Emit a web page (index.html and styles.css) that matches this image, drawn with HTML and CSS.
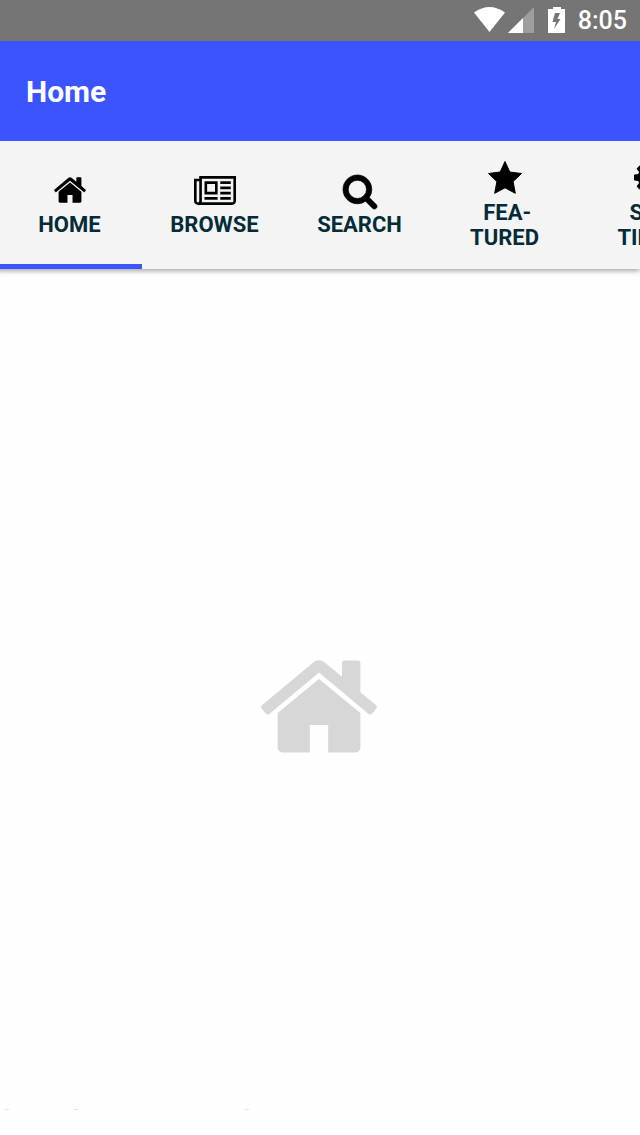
FILE: index.html
```html
<!DOCTYPE html>
<html lang="en">
<head>
<meta charset="utf-8">
<meta name="viewport" content="width=device-width, initial-scale=1">
<title>Home</title>
<link rel="stylesheet" href="styles.css">
</head>
<body>
<div class="status">
  <svg class="wifi" viewBox="0 0 31 25" aria-hidden="true"><path d="M0 5.500Q15.500-5.500 31 5.500L15.500 25z"/></svg>
  <svg class="signal" viewBox="0 0 26 26" aria-hidden="true"><path class="dim" d="M26 0v26H0z"/><path d="M15 11v15H0z"/></svg>
  <svg class="battery" viewBox="0 0 17 26" aria-hidden="true"><path fill-rule="evenodd" d="M5 0h8v2h4v24H0V2h5zM12 6H7L4.500 15H8L6 22l6.500-10H9.500z"/></svg>
  <time class="clock">8:05</time>
</div>
<header class="appbar"><h1 class="title">Home</h1></header>
<nav class="tabs" role="tablist" aria-label="Sections">
  <button class="tab active" role="tab" aria-selected="true">
    <span class="icon"><svg class="i-home" viewBox="88 256 1616 1280" aria-hidden="true"><path id="house" d="M1472 992v480q0 26-19 45t-45 19h-384v-384h-256v384h-384q-26 0-45-19t-19-45v-480q0-1 .5-3t.5-3l575-474 575 474q1 2 1 6zm223-69l-62 74q-8 9-21 11h-3q-13 0-21-7l-692-577-692 577q-12 8-24 7-13-2-21-11l-62-74q-8-10-7-23.500t11-21.500l719-599q32-26 76-26t76 26l244 204v-195q0-14 9-23t23-9h192q14 0 23 9t9 23v408l219 182q10 8 11 21.500t-7 23.500z"/></svg></span>
    <span class="label">HOME</span>
  </button>
  <button class="tab" role="tab" aria-selected="false">
    <span class="icon"><svg class="i-news" viewBox="0 256 2048 1408" aria-hidden="true"><path fill-rule="evenodd" d="M256 256H2048V1472q0 80-56 136t-136 56H192q-80 0-136-56T0 1472V384H256zM256 512H128V1472q0 26 19 45t45 19 45-19 19-45zM384 384V1472q0 33-11 64H1856q26 0 45-19t19-45V384zM512 512H1152V1152H512zM640 640V1024H1024V640zM512 1280H1152V1408H512zM1280 512H1792V640H1280zM1280 768H1792V896H1280zM1280 1024H1792V1152H1280zM1280 1280H1792V1408H1280z"/></svg></span>
    <span class="label">BROWSE</span>
  </button>
  <button class="tab" role="tab" aria-selected="false">
    <span class="icon low"><svg class="i-search" viewBox="64 128 1664 1664" aria-hidden="true"><path stroke="currentColor" stroke-width="36" d="M1216 832q0-185-131.500-316.500t-316.500-131.500-316.500 131.500-131.500 316.500 131.500 316.500 316.500 131.500 316.500-131.500 131.500-316.500zm512 832q0 52-38 90t-90 38q-54 0-90-38l-343-342q-179 124-399 124-143 0-273.500-55.500t-225-150-150-225-55.500-273.500 55.500-273.500 150-225 225-150 273.500-55.500 273.500 55.500 225 150 150 225 55.500 273.500q0 220-124 399l343 343q37 37 37 90z"/></svg></span>
    <span class="label">SEARCH</span>
  </button>
  <button class="tab" role="tab" aria-selected="false">
    <span class="icon"><svg class="i-star" viewBox="0 0 34 33" aria-hidden="true"><path d="M17 .5l4.800 10.500 11.700 1.500-8.400 8.100 2.200 11.700L17 26.800 6.700 32.300l2.200-11.700L.5 12.500 12.200 11z" stroke="currentColor" stroke-linejoin="round"/></svg></span>
    <span class="label">&nbsp;FEA-<br>TURED</span>
  </button>
  <button class="tab" role="tab" aria-selected="false">
    <span class="icon"><svg class="i-cog" viewBox="128 128 1536 1536" aria-hidden="true"><path d="M1152 896q0-106-75-181t-181-75-181 75-75 181 75 181 181 75 181-75 75-181zm512-109v222q0 12-8 23t-20 13l-185 28q-19 54-39 91 35 50 107 138 10 12 10 25t-9 23q-27 37-99 108t-94 71q-12 0-26-9l-138-108q-44 23-91 38-16 136-29 186-7 28-36 28h-222q-14 0-24.500-8.500t-11.500-21.500l-28-184q-49-16-90-37l-141 107q-10 9-25 9-14 0-25-11-126-114-165-168-7-10-7-23 0-12 8-23 15-21 51-66.500t54-70.500q-27-50-41-99l-183-27q-13-2-21-12.500t-8-23.500v-222q0-12 8-23t19-13l186-28q14-46 39-92-40-57-107-138-10-12-10-24 0-10 9-23 26-36 98.500-107.500t94.500-71.500q13 0 26 10l138 107q44-23 91-38 16-136 29-186 7-28 36-28h222q14 0 24.500 8.500t11.500 21.500l28 184q49 16 90 37l142-107q9-9 24-9 13 0 25 10 129 119 165 170 7 8 7 22 0 12-8 23-15 21-51 66.500t-54 70.500q26 50 41 98l183 28q13 2 21 12.500t8 23.500z"/></svg></span>
    <span class="label">&nbsp;SET-<br>TINGS</span>
  </button>
</nav>
<main class="content">
  <svg class="placeholder" viewBox="88 256 1616 1280" role="img" aria-label="Home"><use href="#house"/></svg>
</main>
<footer class="marks" aria-hidden="true"><i class="mark"></i><i class="mark near"></i><i class="mark far"></i></footer>
</body>
</html>
```
FILE: styles.css
```css
* { box-sizing: border-box; }

body {
  margin: 0;
  min-height: 100vh;
  display: flex;
  flex-direction: column;
  overflow-x: hidden;
  background: #fefefe;
  font-family: Roboto, "Liberation Sans", sans-serif;
}

svg { display: block; fill: currentColor; }

.status {
  display: flex;
  justify-content: flex-end;
  align-items: center;
  height: 41px;
  padding: 0 13px 2px 0;
  background: #757575;
  color: #fff;
}
.wifi { width: 31px; height: 25px; margin-right: 3px; }
.signal { width: 26px; height: 26px; margin-right: 14px; }
.signal .dim { opacity: .3; }
.battery { width: 17px; height: 26px; margin-right: 13px; }
.clock { padding-top: 2px; font-size: 25px; line-height: 36px; font-weight: 500; }

.appbar {
  display: flex;
  align-items: center;
  height: 100px;
  padding: 2px 26px 0;
  background: #3b54ff;
}
.title {
  margin: 0;
  color: #fff;
  font-size: 30px;
  line-height: 36px;
  font-weight: 700;
}

.tabs {
  display: flex;
  height: 128px;
  margin-left: -3px;
  overflow: hidden;
  background: #f4f4f4;
  box-shadow: 0 2px 5px rgba(0, 0, 0, .35);
  clip-path: inset(0 0 -10px 0);
}
.tab {
  flex: 0 0 145px;
  display: flex;
  flex-direction: column;
  align-items: center;
  justify-content: center;
  gap: 5px;
  margin: 0;
  padding: 0;
  border: 0;
  background: none;
  color: #042c38;
  font: 700 22px/25px Roboto, "Liberation Sans", sans-serif;
  text-align: center;
}
.active { box-shadow: inset 0 -5px #3b54ff; }
.icon {
  display: flex;
  align-items: center;
  justify-content: center;
  height: 34px;
  color: #000;
}
.low { padding-top: 4px; }
.i-home { width: 32px; height: 26px; }
.i-news { width: 42px; height: 29px; }
.i-search { flex: none; width: 34px; height: 34px; overflow: visible; }
.i-star { width: 34px; height: 33px; }
.i-cog { width: 31px; height: 31px; }

.content {
  flex: 1;
  display: flex;
  align-items: center;
  justify-content: center;
  padding: 34px 2px 0 0;
}
.placeholder { width: 116px; height: 93px; color: #d7d7d7; }

.marks { display: flex; padding: 0 5px 25px; }
.mark { width: 4px; height: 1px; background: #e2e2e2; }
.near { margin-left: 65px; }
.far { margin-left: 167px; }
```
